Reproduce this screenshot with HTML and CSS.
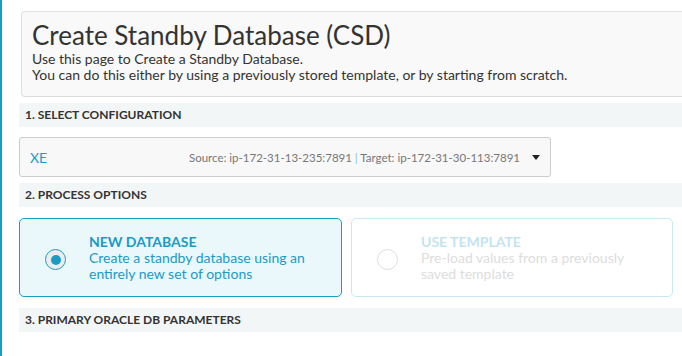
FILE: index.html
```html
<!DOCTYPE html>
<html>
<head>
    <link rel="stylesheet" href="styles.css">
</head>
<body>
    <div class="page">
        <div class="header">
            <h1>Create Standby Database (CSD)</h1>
            <p>Use this page to Create a Standby Database.</p>
            <p>You can do this either by using a previously stored template, or by starting from scratch.</p>
        </div>

        <div class="section">1. SELECT CONFIGURATION</div>

        <div class="select">
            <span class="select-name">XE</span>
            <span class="select-info">Source: ip-172-31-13-235:7891 <span class="pipe">|</span> Target: ip-172-31-30-113:7891</span>
            <span class="caret"></span>
        </div>

        <div class="section">2. PROCESS OPTIONS</div>

        <div class="options">
            <div class="card active">
                <span class="radio"></span>
                <div class="card-text">
                    <div class="card-title">New Database</div>
                    <div class="card-desc">Create a standby database using an entirely new set of options</div>
                </div>
            </div>
            <div class="card">
                <span class="radio"></span>
                <div class="card-text">
                    <div class="card-title">Use Template</div>
                    <div class="card-desc">Pre-load values from a previously saved template</div>
                </div>
            </div>
        </div>

        <div class="section spaced">3. PRIMARY ORACLE DB PARAMETERS</div>
    </div>
</body>
</html>
```

FILE: styles.css
```css
body {
    margin: 0;
    font-family: Lato, "Open Sans", sans-serif;
    color: #333;
    overflow: hidden;
}
.page {
    border-left: 2px solid #1a9bc4;
    padding: 11px 0 0 17px;
    height: 356px;
    width: 682px;
    box-sizing: border-box;
    overflow: hidden;
}
.header {
    margin-left: 2px;
    border: 1px solid #ddd;
    border-right: none;
    border-radius: 4px 0 0 4px;
    background-color: #f9f9f9;
    padding: 8px 10px 13px;
}
.header h1 {
    margin: 0;
    font-size: 26px;
    font-weight: 400;
    line-height: 31px;
    color: #333;
}
.header p {
    margin: 0;
    font-size: 14px;
    line-height: 16px;
}
.section {
    margin-top: 6px;
    height: 24px;
    background-color: #f2f6f7;
    padding-left: 6px;
    font-size: 12px;
    font-weight: 700;
    line-height: 24px;
    color: #333;
}
.section.spaced {
    margin-top: 11px;
}
.select {
    margin-top: 10px;
    width: 532px;
    height: 40px;
    box-sizing: border-box;
    border: 1px solid #ccc;
    border-radius: 3px;
    background-color: #f8f8f8;
    display: flex;
    align-items: center;
    padding: 0 10px;
}
.select-name {
    flex: 1;
    font-size: 14px;
    color: #1a9bc4;
}
.select-info {
    font-size: 11.5px;
    color: #777;
}
.pipe {
    color: #8cc4da;
}
.caret {
    margin-left: 12px;
    width: 0;
    height: 0;
    border-left: 4px solid transparent;
    border-right: 4px solid transparent;
    border-top: 5px solid #222;
}
.options {
    margin-top: 11px;
    display: flex;
    gap: 9px;
}
.card {
    width: 322px;
    height: 79px;
    box-sizing: border-box;
    border: 1px solid #c5eaf2;
    border-radius: 5px;
    background-color: #fff;
    display: flex;
    align-items: center;
    padding-left: 25px;
}
.card.active {
    width: 323px;
    border-color: #1a9bc4;
    background-color: #eaf8fc;
}
.radio {
    width: 21px;
    height: 21px;
    margin-top: 4px;
    box-sizing: border-box;
    border: 1px solid #ddd;
    border-radius: 50%;
    background-color: #fff;
    display: flex;
    align-items: center;
    justify-content: center;
    flex-shrink: 0;
}
.card.active .radio {
    border-color: #1a9bc4;
    background-color: #ececec;
}
.card.active .radio::after {
    content: "";
    width: 10px;
    height: 10px;
    border-radius: 50%;
    background-color: #1a9bc4;
}
.card-text {
    margin-left: 23px;
    max-width: 230px;
    font-size: 14px;
    line-height: 16px;
}
.card-title {
    font-weight: 700;
    text-transform: uppercase;
    color: #c3e4ef;
}
.card-desc {
    color: #ddd;
}
.card.active .card-title,
.card.active .card-desc {
    color: #1a9bc4;
}
```
